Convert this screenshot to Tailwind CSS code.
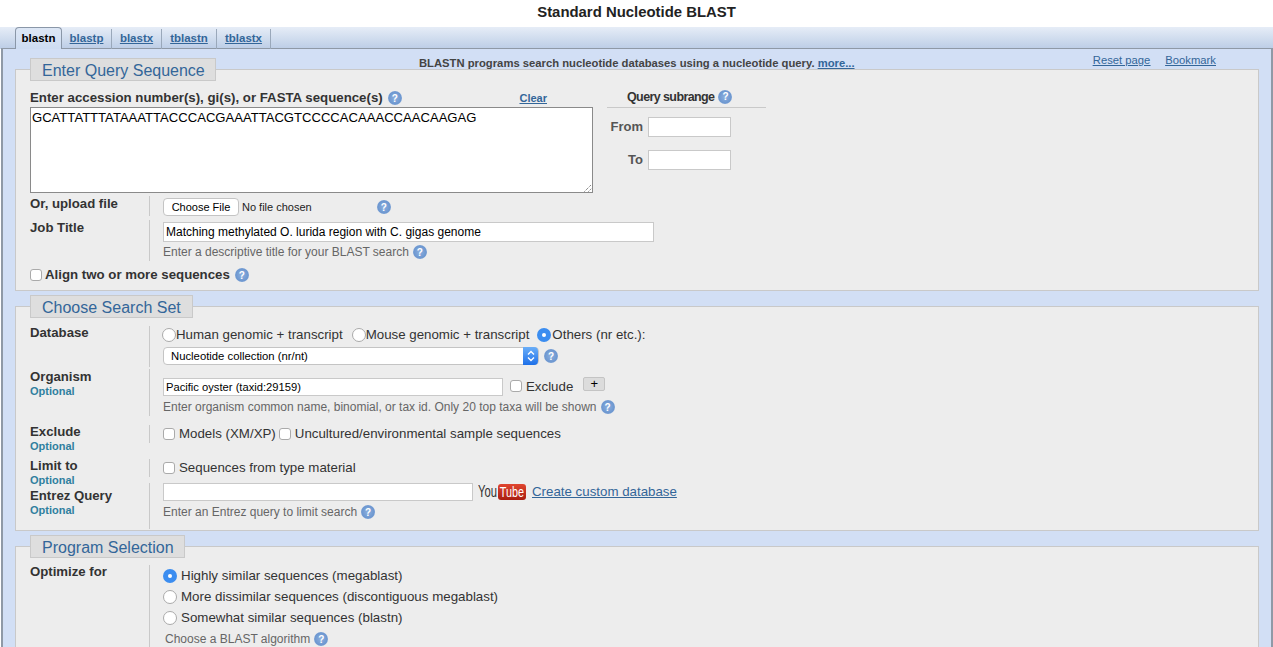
<!DOCTYPE html>
<html lang="en">
<head>
<meta charset="UTF-8">
<title>Standard Nucleotide BLAST</title>
<script src="https://cdn.jsdelivr.net/npm/@tailwindcss/browser@4"></script>
</head>
<body class="h-[647px] overflow-hidden bg-white font-['Liberation_Sans',Arial,sans-serif] text-[#333]">

<!-- Title -->
<h1 class="h-[27px] pt-[3px] text-center text-[14.9px] leading-[18px] font-bold text-[#222]">Standard Nucleotide BLAST</h1>

<!-- Tabs -->
<div class="flex h-[22px] items-end bg-gradient-to-b from-[#e6edf7] to-[#bccde6] pl-[15px] text-[11.5px] font-bold">
  <a class="flex h-[22px] w-[47px] items-center justify-center rounded-t-[4px] border border-b-0 border-[#8a97a8] bg-gradient-to-b from-[#dde7f5] to-[#cddcf2] text-black">blastn</a>
  <a class="flex h-[20px] w-[50px] items-center justify-center border-r border-[#9aa8ba] text-[#336699] underline">blastp</a>
  <a class="flex h-[20px] w-[50px] items-center justify-center border-r border-[#9aa8ba] text-[#336699] underline">blastx</a>
  <a class="flex h-[20px] w-[55px] items-center justify-center border-r border-[#9aa8ba] text-[#336699] underline">tblastn</a>
  <a class="flex h-[20px] w-[54px] items-center justify-center border-r border-[#9aa8ba] text-[#336699] underline">tblastx</a>
</div>

<!-- Panel -->
<div class="ml-px -mt-px h-[600px] border-x-2 border-t border-[#8f99a6] bg-[#d2dff5] px-[12px]">

  <div class="flex h-[20px] text-[11.25px]">
    <p class="ml-[404px] leading-[28px] font-bold text-[#444]">BLASTN programs search nucleotide databases using a nucleotide query. <a class="text-[#336699] underline">more...</a></p>
    <div class="ml-auto mr-[43px] flex gap-[15px] leading-[22px] text-[#336699] underline">
      <a>Reset page</a><a>Bookmark</a>
    </div>
  </div>

  <!-- Enter Query Sequence -->
  <section class="h-[222px] border border-[#c9c9c9] bg-[#ededed] pl-[14px]">
    <div class="-mt-[12px] flex h-[23px] w-[186px] items-center border border-[#c9c9c9] bg-[#dedede] pl-[11px] pt-[2px] text-[16px] text-[#336699]">Enter Query Sequence</div>
    <div class="flex">
      <div class="w-[563px]">
        <div class="flex h-[26px] items-center pt-[8px] text-[13.25px] font-bold">
          <span>Enter accession number(s), gi(s), or FASTA sequence(s)</span>
          <span class="ml-[5px] flex size-[14px] items-center justify-center rounded-full bg-[radial-gradient(circle,#8db0de_0%,#6d97d0_62%,#c6d7ec_100%)] text-[10px] font-bold text-white">?</span>
          <a class="ml-auto mr-[46px] text-[11px] text-[#336699] underline">Clear</a>
        </div>
        <div class="relative h-[86px] w-[563px] border border-[#8a8a8a] bg-white pl-[1px] pt-[2px] text-[13.08px] leading-[16px] text-black">GCATTATTTATAAATTACCCACGAAATTACGTCCCCACAAACCAACAAGAG
          <svg class="absolute right-0 bottom-0" width="8" height="8" viewBox="0 0 8 8" fill="none" stroke="#555" stroke-dasharray="1 1"><path d="M0.5 7.5 7.5 0.5M4.5 7.5 7.5 4.5"/></svg>
        </div>
      </div>
      <div class="ml-[14px] w-[159px] pt-[6px]">
        <div class="flex h-[21px] items-end gap-[4px] border-b border-[#c9c9c9] pb-[3px] pl-[20px] text-[12.5px] leading-[14px] font-bold tracking-[-0.6px]">
          <span>Query subrange</span>
          <span class="flex size-[14px] items-center justify-center rounded-full bg-[radial-gradient(circle,#8db0de_0%,#6d97d0_62%,#c6d7ec_100%)] text-[10px] font-bold tracking-normal text-white">?</span>
        </div>
        <div class="mt-[9px] flex items-center justify-end gap-[5px] pr-[35px] text-[13px] font-bold text-[#555]">
          <span>From</span><div class="h-[20px] w-[83px] border border-[#c9c9c9] bg-white"></div>
        </div>
        <div class="mt-[13px] flex items-center justify-end gap-[5px] pr-[35px] text-[13px] font-bold text-[#555]">
          <span>To</span><div class="h-[20px] w-[83px] border border-[#c9c9c9] bg-white"></div>
        </div>
      </div>
    </div>

    <div class="mt-[3px] flex h-[20px]">
      <div class="w-[119px] pt-px text-[13.2px] leading-[14px] font-bold">Or, upload file</div>
      <div class="flex items-center border-l border-[#c9c9c9] pl-[13px] pt-[2px] text-[11px] text-[#222]">
        <span class="flex h-[18px] w-[76px] items-center justify-center rounded-[4px] border border-[#c4c4c4] bg-white text-black">Choose File</span>
        <span class="ml-[3px]">No file chosen</span>
        <span class="ml-[65px] flex size-[14px] items-center justify-center rounded-full bg-[radial-gradient(circle,#8db0de_0%,#6d97d0_62%,#c6d7ec_100%)] text-[10px] font-bold text-white">?</span>
      </div>
    </div>

    <div class="mt-[4px] flex h-[41px]">
      <div class="w-[119px] pt-px text-[13.2px] leading-[14px] font-bold">Job Title</div>
      <div class="border-l border-[#c9c9c9] pl-[13px] pt-[2px]">
        <div class="flex h-[20px] w-[491px] items-center border border-[#c9c9c9] bg-white pl-[2px] text-[12px] text-black">Matching methylated O. lurida region with C. gigas genome</div>
        <div class="mt-[1px] flex items-center text-[12px] text-[#666]">Enter a descriptive title for your BLAST search
          <span class="ml-[4px] flex size-[14px] items-center justify-center rounded-full bg-[radial-gradient(circle,#8db0de_0%,#6d97d0_62%,#c6d7ec_100%)] text-[10px] font-bold text-white">?</span>
        </div>
      </div>
    </div>

    <div class="mt-[6px] flex h-[16px] items-center text-[13.25px] font-bold">
      <span class="mr-[3px] size-[12px] rounded-[3px] border border-[#aaa] bg-white"></span>
      Align two or more sequences
      <span class="ml-[5px] flex size-[14px] items-center justify-center rounded-full bg-[radial-gradient(circle,#8db0de_0%,#6d97d0_62%,#c6d7ec_100%)] text-[10px] font-bold text-white">?</span>
    </div>
  </section>

  <!-- Choose Search Set -->
  <section class="mt-[15px] h-[225px] border border-[#c9c9c9] bg-[#ededed] pl-[14px]">
    <div class="-mt-[12px] flex h-[23px] w-[163px] items-center border border-[#c9c9c9] bg-[#dedede] pl-[11px] pt-[2px] text-[16px] text-[#336699]">Choose Search Set</div>

    <div class="mt-[8px] flex h-[41px]">
      <div class="w-[119px] text-[13.2px] leading-[14px] font-bold">Database</div>
      <div class="border-l border-[#c9c9c9] pl-[13px]">
        <div class="flex h-[18px] items-center text-[13.3px]">
          <span class="-ml-px size-[14px] rounded-full border border-[#aaa] bg-white"></span>
          <span>Human genomic + transcript</span>
          <span class="ml-[9px] size-[14px] rounded-full border border-[#aaa] bg-white"></span>
          <span>Mouse genomic + transcript</span>
          <span class="ml-[8px] flex size-[14px] items-center justify-center rounded-full bg-[#3b8df0]"><span class="size-[4px] rounded-full bg-white"></span></span>
          <span class="ml-px">Others (nr etc.):</span>
        </div>
        <div class="mt-[3px] flex items-center">
          <div class="flex h-[18px] w-[376px] items-center justify-between rounded-[4px] border border-[#c4c4c4] bg-white pl-[7px] text-[11.3px] text-black">
            <span>Nucleotide collection (nr/nt)</span>
            <span class="flex h-[18px] w-[15px] items-center justify-center rounded-r-[4px] bg-gradient-to-b from-[#6aaef8] to-[#1c6fe8]">
              <svg width="8" height="12" viewBox="0 0 8 12" fill="none" stroke="#fff" stroke-width="1.4"><path d="M1 4.5 4 1.5 7 4.5M1 7.5 4 10.5 7 7.5"/></svg>
            </span>
          </div>
          <span class="ml-[5px] flex size-[14px] items-center justify-center rounded-full bg-[radial-gradient(circle,#8db0de_0%,#6d97d0_62%,#c6d7ec_100%)] text-[10px] font-bold text-white">?</span>
        </div>
      </div>
    </div>

    <div class="mt-[2px] flex h-[47px]">
      <div class="w-[119px] pt-px text-[13.2px] leading-[14px] font-bold">Organism<div class="text-[11px] text-[#2f7f9f]">Optional</div></div>
      <div class="border-l border-[#c9c9c9] pl-[13px] pt-[7px]">
        <div class="flex h-[20px] items-center">
          <div class="mt-[2px] flex h-[18px] w-[340px] items-center border border-[#c9c9c9] bg-white pl-[2px] text-[11.2px] text-black">Pacific oyster (taxid:29159)</div>
          <span class="ml-[7px] size-[12px] rounded-[3px] border border-[#aaa] bg-white"></span>
          <span class="ml-[4px] pt-[2px] text-[13.3px]">Exclude</span>
          <span class="ml-[10px] -mt-[4px] flex h-[14px] w-[22px] items-center justify-center rounded-[2px] border border-[#c4c4c4] bg-[#dcdcdc] text-[13px] text-black">+</span>
        </div>
        <div class="mt-[2px] flex items-center text-[12px] text-[#666]">Enter organism common name, binomial, or tax id. Only 20 top taxa will be shown
          <span class="ml-[4px] flex size-[14px] items-center justify-center rounded-full bg-[radial-gradient(circle,#8db0de_0%,#6d97d0_62%,#c6d7ec_100%)] text-[10px] font-bold text-white">?</span>
        </div>
      </div>
    </div>

    <div class="mt-[9px] flex h-[26px]">
      <div class="w-[119px] text-[13.2px] leading-[14px] font-bold">Exclude<div class="text-[11px] text-[#2f7f9f]">Optional</div></div>
      <div class="flex h-[18px] items-center border-l border-[#c9c9c9] pl-[13px] text-[13.3px]">
        <span class="size-[12px] rounded-[3px] border border-[#aaa] bg-white"></span>
        <span class="ml-[4px]">Models (XM/XP)</span>
        <span class="ml-[3px] size-[12px] rounded-[3px] border border-[#aaa] bg-white"></span>
        <span class="ml-[4px]">Uncultured/environmental sample sequences</span>
      </div>
    </div>

    <div class="mt-[8px] flex h-[16px]">
      <div class="w-[119px] text-[13.2px] leading-[14px] font-bold">Limit to<div class="text-[11px] text-[#2f7f9f]">Optional</div></div>
      <div class="flex h-[18px] items-center border-l border-[#c9c9c9] pl-[13px] text-[13.3px]">
        <span class="size-[12px] rounded-[3px] border border-[#aaa] bg-white"></span>
        <span class="ml-[4px]">Sequences from type material</span>
      </div>
    </div>

    <div class="mt-[14px] flex h-[40px]">
      <div class="w-[119px] text-[13.2px] leading-[14px] font-bold">Entrez Query<div class="text-[11px] text-[#2f7f9f]">Optional</div></div>
      <div class="-mt-[6px] border-l border-[#c9c9c9] pl-[13px]">
        <div class="flex h-[18px] items-center">
          <div class="h-[18px] w-[310px] border border-[#c9c9c9] bg-white"></div>
          <span class="ml-[5px] inline-block w-[20px] origin-left scale-x-[0.66] text-[17px] text-[#333]">You</span>
          <span class="flex h-[16px] w-[28px] items-center justify-center rounded-[3px] bg-gradient-to-b from-[#e0452f] to-[#a91d10]"><span class="scale-x-[0.72] text-[15px] text-white">Tube</span></span>
          <a class="ml-[6px] text-[13.3px] text-[#336699] underline">Create custom database</a>
        </div>
        <div class="mt-[2px] flex items-center text-[12px] text-[#666]">Enter an Entrez query to limit search
          <span class="ml-[4px] flex size-[14px] items-center justify-center rounded-full bg-[radial-gradient(circle,#8db0de_0%,#6d97d0_62%,#c6d7ec_100%)] text-[10px] font-bold text-white">?</span>
        </div>
      </div>
    </div>
  </section>

  <!-- Program Selection -->
  <section class="mt-[15px] h-[120px] border border-[#c9c9c9] bg-[#ededed] pl-[14px]">
    <div class="-mt-[12px] flex h-[23px] w-[155px] items-center border border-[#c9c9c9] bg-[#dedede] pl-[11px] pt-[2px] text-[16px] text-[#336699]">Program Selection</div>
    <div class="mt-[7px] flex">
      <div class="w-[119px] text-[13.2px] leading-[14px] font-bold">Optimize for</div>
      <div class="border-l border-[#c9c9c9] pl-[13px] text-[13.33px]">
        <div class="flex h-[21px] items-center">
          <span class="flex size-[14px] items-center justify-center rounded-full bg-[#3b8df0]"><span class="size-[4px] rounded-full bg-white"></span></span>
          <span class="ml-[4px]">Highly similar sequences (megablast)</span>
        </div>
        <div class="flex h-[21px] items-center">
          <span class="size-[14px] rounded-full border border-[#aaa] bg-white"></span>
          <span class="ml-[4px]">More dissimilar sequences (discontiguous megablast)</span>
        </div>
        <div class="flex h-[21px] items-center">
          <span class="size-[14px] rounded-full border border-[#aaa] bg-white"></span>
          <span class="ml-[4px]">Somewhat similar sequences (blastn)</span>
        </div>
        <div class="mt-[2px] ml-[2px] flex items-center text-[12px] text-[#666]">Choose a BLAST algorithm
          <span class="ml-[4px] flex size-[14px] items-center justify-center rounded-full bg-[radial-gradient(circle,#8db0de_0%,#6d97d0_62%,#c6d7ec_100%)] text-[10px] font-bold text-white">?</span>
        </div>
      </div>
    </div>
  </section>
</div>
</body>
</html>
